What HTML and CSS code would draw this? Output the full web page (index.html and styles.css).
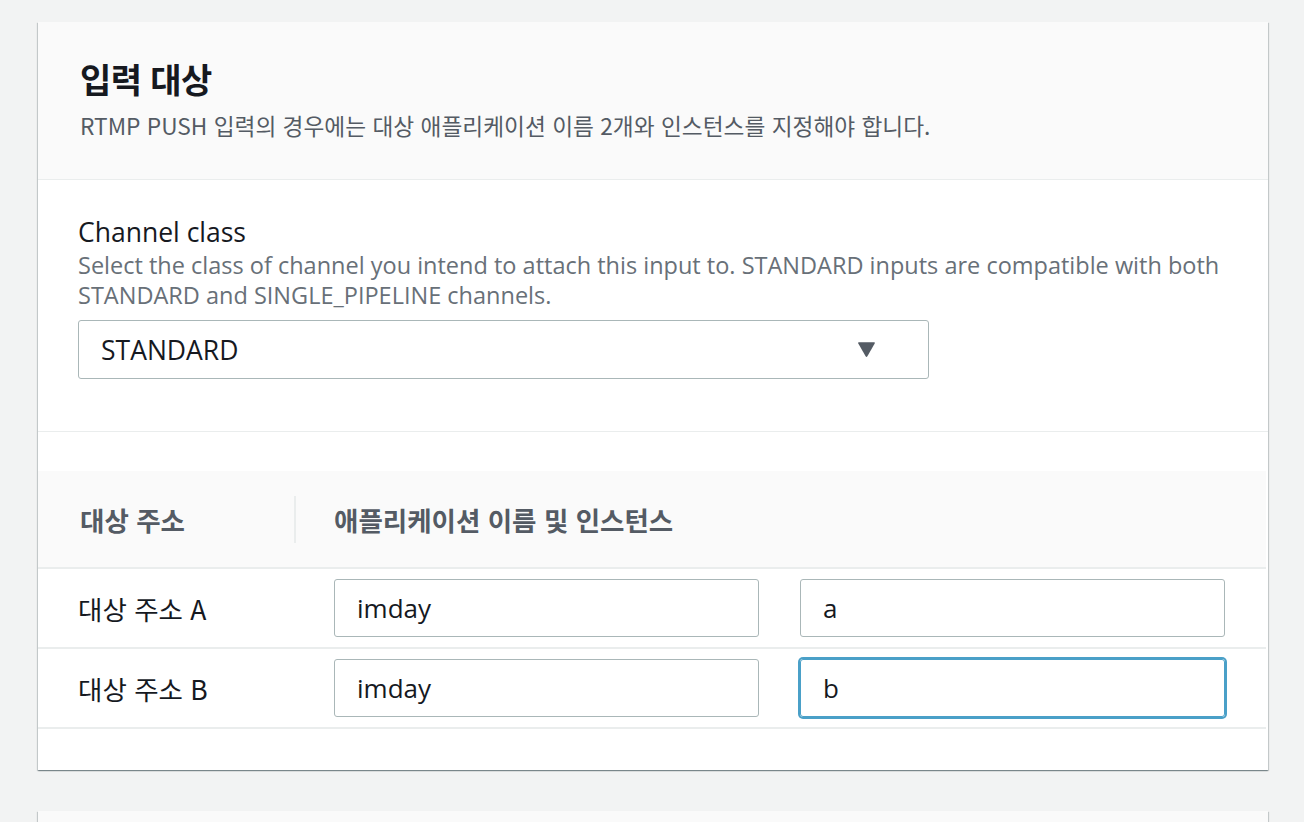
FILE: index.html
```html
<!DOCTYPE html>
<html lang="ko">
<head>
<meta charset="utf-8">
<title>입력 대상</title>
<link rel="stylesheet" href="styles.css">
</head>
<body>
<main class="page">
  <section class="card">
    <header class="card-header">
      <h2 class="card-title">입력 대상</h2>
      <p class="card-subtitle">RTMP PUSH 입력의 경우에는 대상 애플리케이션 이름 2개와 인스턴스를 지정해야 합니다.</p>
    </header>
    <div class="card-section">
      <div class="field-label">Channel class</div>
      <div class="field-desc">Select the class of channel you intend to attach this input to. STANDARD inputs are compatible with both STANDARD and SINGLE_PIPELINE channels.</div>
      <div class="select">
        <span class="select-value">STANDARD</span>
        <svg class="caret" width="19" height="17" viewBox="0 0 19 17"><path d="M2 1.2 H17 Q18.4 1.2 17.7 2.5 L10.4 15.3 Q9.5 16.7 8.6 15.3 L1.3 2.5 Q0.6 1.2 2 1.2 Z" fill="#545b64"/></svg>
      </div>
    </div>
    <div class="table">
      <div class="table-head">
        <div class="th th-first">대상 주소</div>
        <div class="th th-second">애플리케이션 이름 및 인스턴스</div>
      </div>
      <div class="tr">
        <div class="td-label">대상 주소 A</div>
        <div class="td-inputs">
          <div class="input">imday</div>
          <div class="input">a</div>
        </div>
      </div>
      <div class="tr">
        <div class="td-label">대상 주소 B</div>
        <div class="td-inputs">
          <div class="input">imday</div>
          <div class="input input-focus">b</div>
        </div>
      </div>
    </div>
  </section>
  <section class="card card-next"></section>
</main>
</body>
</html>
```
FILE: styles.css
```css
* { box-sizing: border-box; }
html, body { margin: 0; padding: 0; }
body {
  background: #f2f3f3;
  font-family: "Open Sans", "Noto Sans CJK KR", sans-serif;
  color: #16191f;
  height: 822px;
  overflow: hidden;
}
.page {
  display: flex;
  flex-direction: column;
  gap: 41px;
  padding: 22px 36px 0 38px;
}
.card {
  width: 1230px;
  background: #fff;
  box-shadow: 0 1px 1px 0 rgba(0,28,36,.3), 1px 1px 1px 0 rgba(0,28,36,.15), -1px 1px 1px 0 rgba(0,28,36,.15);
}
.card-next {
  height: 40px;
  background: #fafafa;
}
.card-header {
  background: #fafafa;
  border-bottom: 1px solid #eaeded;
  height: 158px;
  padding: 37px 40px 0 42px;
}
.card-title {
  margin: 0;
  font-size: 34px;
  line-height: 40px;
  font-weight: 700;
  font-family: "Noto Sans CJK KR", sans-serif;
  letter-spacing: -0.6px;
}
.card-subtitle {
  margin: 13px 0 0;
  font-size: 22.7px;
  line-height: 28px;
  color: #545b64;
  font-family: "Noto Sans CJK KR", sans-serif;
}
.card-section {
  padding: 34px 40px 52px 40px;
  border-bottom: 1px solid #eaeded;
}
.field-label {
  font-size: 26.5px;
  line-height: 36px;
}
.field-desc {
  font-size: 23.5px;
  line-height: 30px;
  color: #687078;
}
.select {
  margin-top: 10px;
  width: 851px;
  height: 59px;
  border: 1px solid #aab7b8;
  border-radius: 3px;
  display: flex;
  align-items: center;
  justify-content: space-between;
  padding: 0 52px 0 22px;
}
.select-value {
  font-size: 26.5px;
}
.caret { display: block; }
.table {
  margin-top: 39px;
  width: 1228px;
  padding-bottom: 41px;
}
.table-head {
  background: #fafafa;
  height: 98px;
  display: flex;
  align-items: center;
  border-bottom: 2px solid #eaeded;
}
.th {
  font-size: 26.5px;
  font-weight: 700;
  color: #545b64;
  font-family: "Noto Sans CJK KR", sans-serif;
}
.th-first {
  width: 258px;
  padding-left: 42px;
  border-right: 2px solid #eaeded;
  height: 47px;
  display: flex;
  align-items: center;
}
.th-second {
  padding-left: 38px;
}
.tr {
  display: flex;
  align-items: center;
  height: 80px;
  border-bottom: 2px solid #eaeded;
}
.td-label {
  width: 258px;
  padding-left: 40px;
  font-size: 26.5px;
  font-family: "Noto Sans CJK KR", sans-serif;
}
.td-inputs {
  flex: 1;
  display: flex;
  gap: 41px;
  padding: 0 41px 0 38px;
}
.input {
  flex: 1;
  height: 58px;
  border: 1px solid #aab7b8;
  border-radius: 3px;
  display: flex;
  align-items: center;
  padding-left: 22px;
  font-size: 26px;
}
.input-focus {
  border-color: #4aa0c8;
  box-shadow: 0 0 0 2px #4aa0c8;
}
```
